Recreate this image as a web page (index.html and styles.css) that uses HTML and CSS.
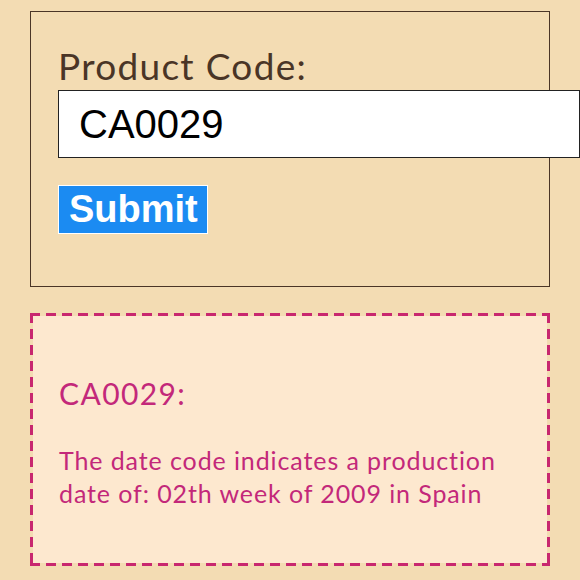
FILE: index.html
```html
<!DOCTYPE html>
<html>
<head>
<meta charset="utf-8">
<link rel="stylesheet" href="styles.css">
</head>
<body>
<form class="lookup">
  <label class="lookup-label" for="code">Product Code:</label>
  <input class="lookup-input" id="code" type="text" value="CA0029">
  <button class="lookup-submit" type="button">Submit</button>
</form>
<section class="result">
  <h2 class="result-title">CA0029:</h2>
  <p class="result-text">The date code indicates a production date of: 02th week of 2009 in Spain</p>
</section>
</body>
</html>
```
FILE: styles.css
```css
html, body {
  margin: 0;
  padding: 0;
  background: #f3dcb3;
}
body {
  padding: 11px 30px 0 30px;
  font-family: Lato, "Noto Sans", sans-serif;
  overflow: hidden;
}
.lookup {
  display: flex;
  flex-direction: column;
  align-items: flex-start;
  border: 1.5px solid #4a3526;
  padding: 32px 0 52px 27px;
  height: 276px;
  box-sizing: border-box;
}
.lookup-label {
  font-size: 37px;
  line-height: 44px;
  letter-spacing: 1.3px;
  color: #4a3526;
  height: 46px;
}
.lookup-input {
  width: 522px;
  height: 69px;
  box-sizing: border-box;
  border: 1.5px solid #222;
  background: #fff;
  padding: 0 0 0 20px;
  margin: 0;
  font-family: "Liberation Sans", Arial, sans-serif;
  font-size: 40px;
  color: #000;
  outline: none;
}
.lookup-submit {
  margin-top: 27px;
  height: 49px;
  box-sizing: border-box;
  border: 1px solid #fff;
  background: #1b8bf2;
  color: #fff;
  font-family: "Liberation Sans", Arial, sans-serif;
  font-weight: bold;
  font-size: 38px;
  padding: 0 9px 0 10px;
  line-height: 45px;
}
.result {
  margin-top: 26px;
  height: 253px;
  box-sizing: border-box;
  border: 3px solid transparent;
  background:
    repeating-linear-gradient(90deg, #c8276f 0 10px, transparent 10px 16px) left top / 100% 3px no-repeat border-box,
    repeating-linear-gradient(90deg, #c8276f 0 10px, transparent 10px 16px) left bottom / 100% 3px no-repeat border-box,
    repeating-linear-gradient(180deg, #c8276f 0 10px, transparent 10px 16px) left top / 3px 100% no-repeat border-box,
    repeating-linear-gradient(180deg, #c8276f 0 10px, transparent 10px 16px) right top / 3px 100% no-repeat border-box,
    linear-gradient(#fde8cf, #fde8cf) padding-box;
  padding: 59px 20px 0 26px;
  color: #c3287a;
}
.result-title {
  margin: 0;
  font-size: 30px;
  font-weight: normal;
  letter-spacing: 1.4px;
  line-height: 36px;
}
.result-text {
  margin: 33px 0 0 0;
  font-size: 25px;
  letter-spacing: 0.9px;
  line-height: 33px;
}
```
